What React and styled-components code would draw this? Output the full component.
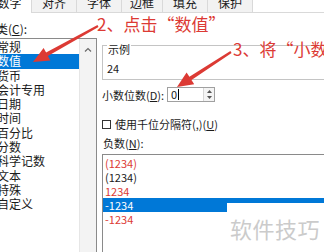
import React from 'react';
import styled, { createGlobalStyle } from 'styled-components';

const Global = createGlobalStyle`
  *{ box-sizing:border-box; }
  html, body { margin:0; padding:0; background:#fff; }
  body { font-family:"Noto Sans CJK SC","Noto Sans",sans-serif; }
`;

const RED = '#dc3a34';
const BLUE = '#0078d7';

//#region layout
const Page = styled.div`
  position:relative;
  width:324px;
  height:252px;
  overflow:hidden;
  background:#fff;
  color:#1b1b1b;
  font-size:12px;
`;

const TabBar = styled.div`
  display:flex;
  height:21px;
  margin:-8px 0 0 -12px;
`;

const Tab = styled.div`
  flex:none;
  width:${p => p.$w}px;
  display:flex;
  align-items:center;
  justify-content:center;
  font-size:12px;
  line-height:13px;
  background:${p => (p.$active ? '#fff' : '#f2f2f2')};
  border-right:1px solid #d9d9d9;
  border-bottom:${p => (p.$active ? 'none' : '1px solid #d9d9d9')};
`;

const TabFill = styled.div`
  flex:1;
  border-bottom:1px solid #d9d9d9;
`;

const Body = styled.div`
  display:grid;
  grid-template-columns:103px 1fr;
  column-gap:5px;
  margin-left:-6px;
`;

const LeftCol = styled.div`
  display:flex;
  flex-direction:column;
  min-width:0;
`;

const RightCol = styled.div`
  display:flex;
  flex-direction:column;
  min-width:0;
  font-size:11px;
`;

const Caption = styled.div`
  font-size:${p => p.$size || 12}px;
  line-height:${p => p.$lh || 16}px;
  margin:${p => p.$m || '0'};
  white-space:nowrap;
  u{ text-decoration:underline; text-underline-offset:1px; }
`;
//#endregion

//#region category list
const ListBox = styled.div`
  display:grid;
  grid-template-columns:84px 17px;
  width:103px;
  height:220px;
  margin-top:1px;
  border:1px solid #8a8a8a;
  background:#fff;
`;

const Items = styled.div`
  display:flex;
  flex-direction:column;
  padding-top:1px;
`;

const Item = styled.div`
  height:${p => p.$h || 14.3}px;
  line-height:${p => p.$h || 14.3}px;
  padding-left:${p => p.$pad || 2}px;
  font-size:${p => p.$size || 12}px;
  white-space:nowrap;
  color:${p => (p.$selected ? '#fff' : p.$red ? RED : '#1b1b1b')};
  background:${p => (p.$selected ? BLUE : 'transparent')};
`;

const ScrollBar = styled.div`
  display:flex;
  justify-content:center;
  padding-top:8px;
  background:#f3f3f3;
  border-left:1px solid #e6e6e6;
`;
//#endregion

//#region right side
const GroupBox = styled.fieldset`
  margin:22px 0 0 0;
  padding:0 5px 5px 4px;
  width:250px;
  min-width:0;
  border:1px solid #c4c4c4;
  border-radius:0;
  legend{
    padding:8px 1px 0 1px;
    margin-left:0;
    line-height:12px;
    font-size:11px;
  }
`;

const Sample = styled.div`
  margin-top:7px;
  line-height:12px;
`;

const SpinRow = styled.div`
  display:grid;
  grid-template-columns:65px 48px;
  align-items:center;
  margin-top:7px;
`;

const SpinBox = styled.div`
  display:grid;
  grid-template-columns:1fr 11px;
  height:15px;
  border:1px solid #a0a0a0;
  background:#fff;
`;

const SpinValue = styled.div`
  display:flex;
  align-items:center;
  padding-left:3px;
  line-height:13px;
  span{
    width:1px;
    height:11px;
    margin-left:1px;
    background:#000;
  }
`;

const SpinButtons = styled.div`
  display:grid;
  grid-template-rows:1fr 1fr;
  border-left:1px solid #d6d6d6;
  background:#f4f4f4;
  > div{
    display:flex;
    align-items:center;
    justify-content:center;
  }
`;

const CheckRow = styled.div`
  display:flex;
  align-items:center;
  gap:4px;
  margin-top:16px;
  line-height:12px;
`;

const CheckBox = styled.div`
  width:9px;
  height:9px;
  border:1px solid #333;
  background:#fff;
`;

const NegList = styled.div`
  display:flex;
  flex-direction:column;
  width:260px;
  height:120px;
  margin-top:5px;
  padding-top:1px;
  border:1px solid #8a8a8a;
`;
//#endregion

//#region overlays
const Note = styled.div`
  position:absolute;
  left:${p => p.$x}px;
  top:${p => p.$y}px;
  font-size:17px;
  line-height:20px;
  color:${RED};
  white-space:nowrap;
`;

const Watermark = styled.div`
  position:absolute;
  left:227px;
  top:203px;
  right:0;
  bottom:0;
  padding:12px 0 0 3px;
  background:#fff;
  color:#cbcbcb;
  font-size:22px;
  line-height:26px;
  letter-spacing:0.5px;
  white-space:nowrap;
`;

const ArrowLayer = styled.svg`
  position:absolute;
  left:0;
  top:0;
  pointer-events:none;
`;
//#endregion

const arrowPoints = (tx, ty, px, py, w0 = 2.2, w1 = 3.8, len = 16, hw = 7) => {
  const dx = px - tx, dy = py - ty;
  const d = Math.hypot(dx, dy);
  const ux = dx / d, uy = dy / d;
  const nx = -uy, ny = ux;
  const bx = px - ux * len, by = py - uy * len;
  const pts = [
    [tx + nx * w0 / 2, ty + ny * w0 / 2],
    [bx + nx * w1 / 2, by + ny * w1 / 2],
    [bx + nx * hw, by + ny * hw],
    [px, py],
    [bx - nx * hw, by - ny * hw],
    [bx - nx * w1 / 2, by - ny * w1 / 2],
    [tx - nx * w0 / 2, ty - ny * w0 / 2],
  ];
  return pts.map(p => p.map(v => v.toFixed(1)).join(',')).join(' ');
};

const tabs = [
  { t: '数字', w: 44, active: true },
  { t: '对齐', w: 45 },
  { t: '字体', w: 45 },
  { t: '边框', w: 41 },
  { t: '填充', w: 45 },
  { t: '保护', w: 45 },
];

const categories = ['常规', '数值', '货币', '会计专用', '日期', '时间', '百分比', '分数', '科学记数', '文本', '特殊', '自定义'];

const negatives = [
  { t: '(1234)', red: true },
  { t: '(1234)' },
  { t: '1234', red: true },
  { t: '-1234', selected: true },
  { t: '-1234', red: true },
];

export default function App() {
  return (
    <Page>
      <Global />
      <TabBar>
        {tabs.map(tab => (
          <Tab key={tab.t} $w={tab.w} $active={tab.active}>{tab.t}</Tab>
        ))}
        <TabFill />
      </TabBar>

      <Body>
        <LeftCol>
          <Caption $m="8px 0 0 -10px">分类(<u>C</u>):</Caption>
          <ListBox>
            <Items>
              {categories.map(c => (
                <Item key={c} $selected={c === '数值'}>{c}</Item>
              ))}
            </Items>
            <ScrollBar>
              <svg width="8" height="5" viewBox="0 0 8 5">
                <path d="M1 4.5 L4 1.5 L7 4.5" fill="none" stroke="#6a6a6a" strokeWidth="1.2" />
              </svg>
            </ScrollBar>
          </ListBox>
        </LeftCol>

        <RightCol>
          <GroupBox>
            <legend>示例</legend>
            <Sample>24</Sample>
          </GroupBox>

          <SpinRow>
            <Caption $size={11} $lh={12}>小数位数(<u>D</u>):</Caption>
            <SpinBox>
              <SpinValue>0<span /></SpinValue>
              <SpinButtons>
                <div>
                  <svg width="5" height="3" viewBox="0 0 5 3"><path d="M0 3 L2.5 0 L5 3 Z" fill="#555" /></svg>
                </div>
                <div>
                  <svg width="5" height="3" viewBox="0 0 5 3"><path d="M0 0 L2.5 3 L5 0 Z" fill="#555" /></svg>
                </div>
              </SpinButtons>
            </SpinBox>
          </SpinRow>

          <CheckRow>
            <CheckBox />
            <Caption $size={11} $lh={12}>使用千位分隔符(,)(<u>U</u>)</Caption>
          </CheckRow>

          <Caption $size={11} $lh={12} $m="7px 0 0 1px">负数(<u>N</u>):</Caption>
          <NegList>
            {negatives.map((n, i) => (
              <Item key={i} $h={14} $size={11} $red={n.red} $selected={n.selected}>{n.t}</Item>
            ))}
          </NegList>
        </RightCol>
      </Body>

      <Note $x={97} $y={14}>2、点击“数值”</Note>
      <Note $x={233} $y={39}>3、将“小数</Note>

      <ArrowLayer width="324" height="252" viewBox="0 0 324 252">
        <polygon points={arrowPoints(98, 26, 33, 62)} fill={RED} />
        <polygon points={arrowPoints(231, 52, 177, 87)} fill={RED} />
      </ArrowLayer>

      <Watermark>软件技巧</Watermark>
    </Page>
  );
}
